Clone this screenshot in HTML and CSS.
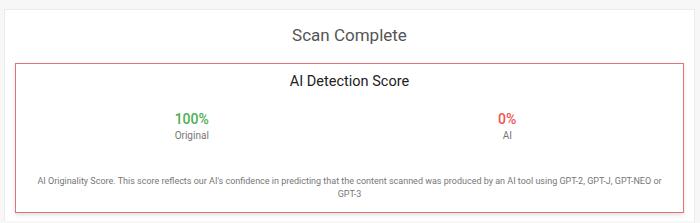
FILE: index.html
```html
<!DOCTYPE html>
<html lang="en">
<head>
    <meta charset="UTF-8">
    <meta name="viewport" content="width=device-width, initial-scale=1.0">
    <title>Scan Complete</title>
    <link rel="stylesheet" href="styles.css">
</head>
<body>
    <div class="card">
        <h2 class="card-title">Scan Complete</h2>
        <div class="score-box">
            <h3 class="score-title">AI Detection Score</h3>
            <div class="score-row">
                <div class="score">
                    <div class="score-value original">100%</div>
                    <div class="score-label">Original</div>
                </div>
                <div class="score">
                    <div class="score-value ai">0%</div>
                    <div class="score-label">AI</div>
                </div>
            </div>
            <p class="score-note">AI Originality Score. This score reflects our AI's confidence in predicting that the content scanned was produced by an AI tool using GPT-2, GPT-J, GPT-NEO or GPT-3</p>
        </div>
    </div>
</body>
</html>
```

FILE: styles.css
```css
body {
    font-family: Roboto, "Liberation Sans", Arial, sans-serif;
    margin: 0;
    padding: 0;
    background-color: #f7f7f7;
}
.card {
    margin: 9px 5px 0 4px;
    background-color: #fff;
    border: 1px solid #ebebeb;
    border-bottom: none;
    padding: 14px 10px 8px 10px;
}
.card-title {
    margin: 0 0 17px 0;
    font-size: 17px;
    line-height: 22px;
    font-weight: 400;
    color: #555;
    text-align: center;
}
.score-box {
    border: 1px solid #e57373;
    box-shadow: 0 2px 4px rgba(0, 0, 0, 0.12);
    padding: 8px 18px 11px 18px;
    text-align: center;
}
.score-title {
    margin: 0;
    font-size: 14.5px;
    line-height: 19px;
    font-weight: 400;
    color: #222;
}
.score-row {
    display: grid;
    grid-template-columns: 1fr 1fr;
    margin-top: 19px;
}
.score-value {
    font-size: 14px;
    line-height: 18px;
    font-weight: 500;
}
.score-value.original { color: #4caf50; }
.score-value.ai { color: #ef5350; }
.score-label {
    margin-top: 1px;
    font-size: 10px;
    line-height: 14px;
    color: #777;
}
.score-note {
    margin: 32px 0 0 0;
    font-size: 9px;
    line-height: 13px;
    color: #777;
}
```
